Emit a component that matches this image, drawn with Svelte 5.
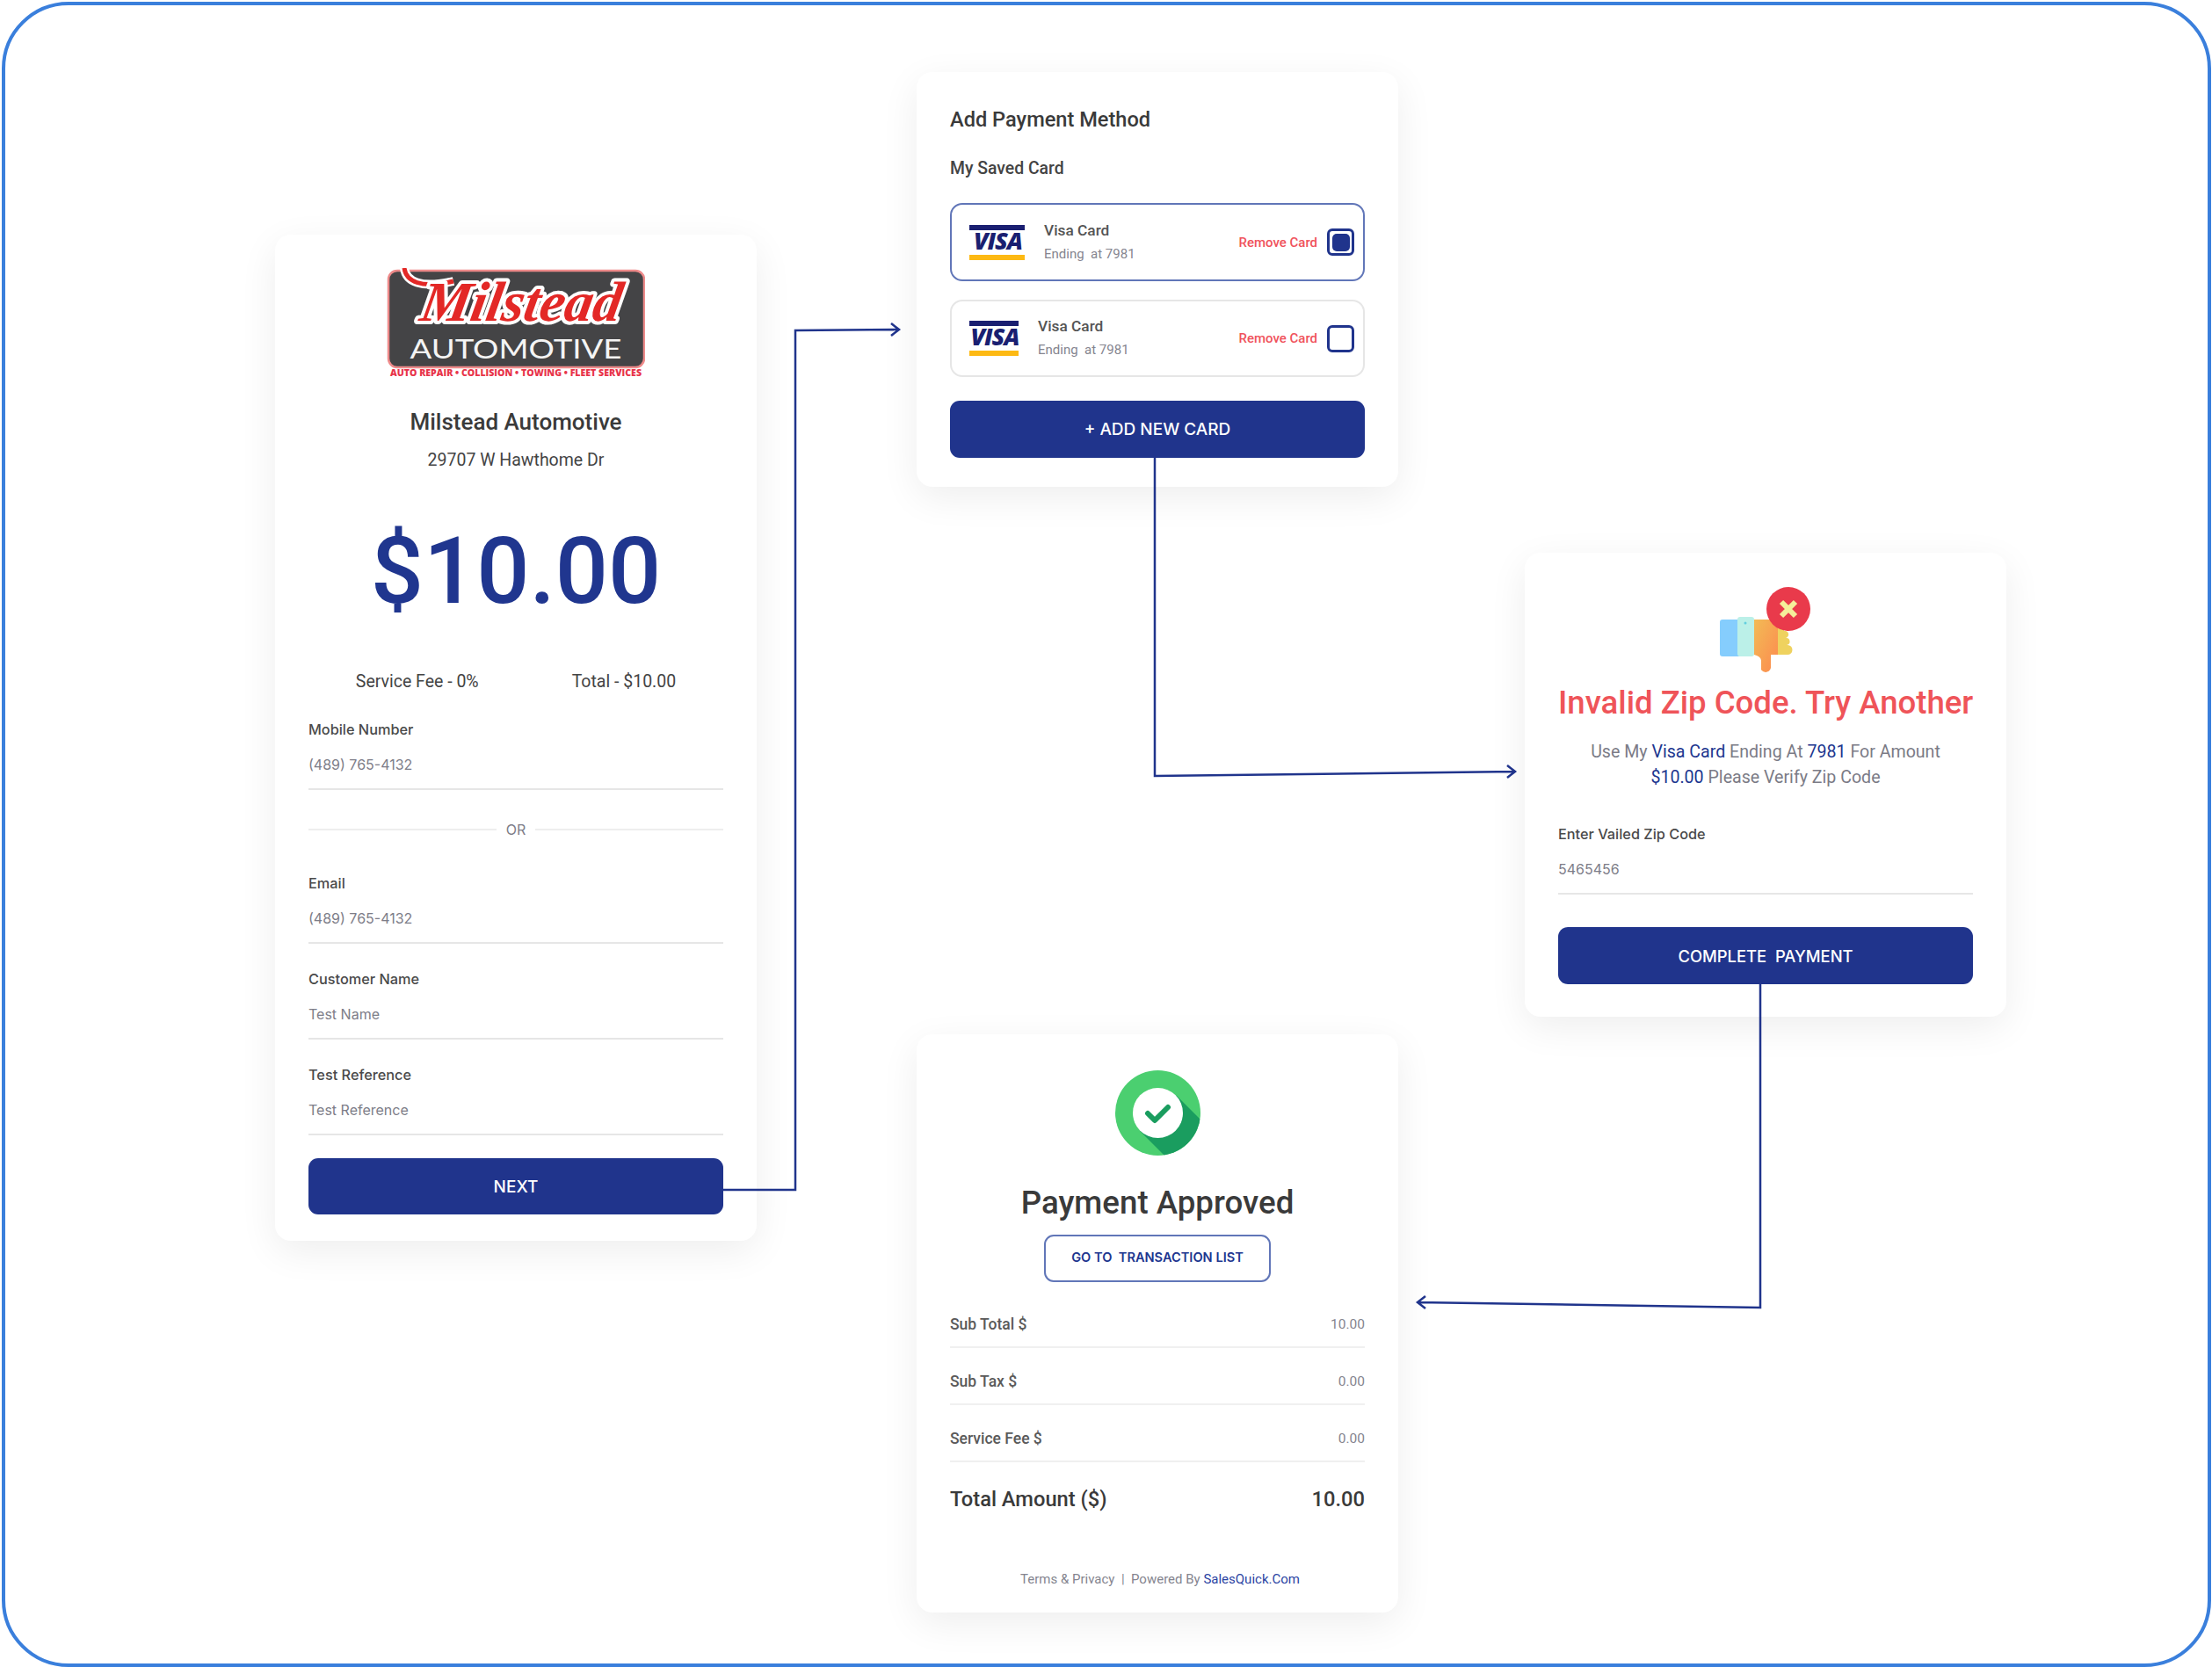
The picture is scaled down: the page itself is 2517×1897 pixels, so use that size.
<script>
	const fields = [
		{ label: "Customer Name", value: "Test Name" },
		{ label: "Test Reference", value: "Test Reference" }
	];
	const rows = [
		{ label: "Sub Total $", value: "10.00" },
		{ label: "Sub Tax $", value: "0.00" },
		{ label: "Service Fee $", value: "0.00" }
	];
</script>

{#snippet visa(width)}
	<svg class="visa" {width} height="40" viewBox="0 0 {width} 40">
		<rect width={width} height="6" fill="#1a1f71" />
		<rect y="34" width={width} height="6" fill="#fdb913" />
		<text x={width / 2 + 1} y="28" text-anchor="middle" class="visa-text">VISA</text>
	</svg>
{/snippet}

<div class="canvas">
	<svg class="links" width="2517" height="1897" viewBox="0 0 2517 1897" fill="none">
		<path d="M823 1354 H905 V376 L1023 375 M1014 368 L1023 375 L1014 382" />
		<path d="M1314 521 V883 L1724 878 M1715 871 L1724 878 L1715 885" />
		<path d="M2003 1120 V1488 L1613 1482 M1622 1475 L1613 1482 L1622 1489" />
	</svg>

	<section class="card start">
		<svg class="logo" width="294" height="125" viewBox="0 0 294 125">
			<rect x="2" y="3" width="291" height="110" rx="10" fill="#444446" stroke="#ee8a8a" stroke-width="2.5" />
			<path d="M20 0 C22 15 38 24 76 15" fill="none" stroke="#fff" stroke-width="10" />
			<path d="M20 0 C22 15 38 24 76 15" fill="none" stroke="#e32826" stroke-width="5" />
			<g transform="translate(36 60) skewX(-10)">
				<text class="script" textLength="228" lengthAdjust="spacingAndGlyphs">Milstead</text>
			</g>
			<text x="147" y="103" class="auto" text-anchor="middle" textLength="241" lengthAdjust="spacingAndGlyphs">AUTOMOTIVE</text>
			<text x="147" y="123" class="tag" text-anchor="middle" textLength="286" lengthAdjust="spacingAndGlyphs">AUTO REPAIR • COLLISION • TOWING • FLEET SERVICES</text>
		</svg>
		<h2 class="biz">Milstead Automotive</h2>
		<p class="addr">29707 W Hawthome Dr</p>
		<div class="amount">$10.00</div>
		<div class="fees"><span>Service Fee - 0%</span><span>Total - $10.00</span></div>

		<div class="field first">
			<div class="label">Mobile Number</div>
			<div class="value">(489) 765-4132</div>
		</div>
		<div class="or"><span>OR</span></div>
		<div class="field email">
			<div class="label">Email</div>
			<div class="value">(489) 765-4132</div>
		</div>
		{#each fields as f}
			<div class="field">
				<div class="label">{f.label}</div>
				<div class="value">{f.value}</div>
			</div>
		{/each}
		<button class="btn next">NEXT</button>
	</section>

	<section class="card method">
		<h3>Add Payment Method</h3>
		<h4>My Saved Card</h4>
		<div class="saved active">
			{@render visa(63)}
			<div class="saved-info">
				<div class="saved-name">Visa Card</div>
				<div class="saved-end">Ending&nbsp; at 7981</div>
			</div>
			<span class="remove">Remove Card</span>
			<span class="check on"><i></i></span>
		</div>
		<div class="saved">
			{@render visa(56)}
			<div class="saved-info">
				<div class="saved-name">Visa Card</div>
				<div class="saved-end">Ending&nbsp; at 7981</div>
			</div>
			<span class="remove">Remove Card</span>
			<span class="check"></span>
		</div>
		<button class="btn add">+ ADD NEW CARD</button>
	</section>

	<section class="card invalid">
		<svg class="thumb" width="104" height="98" viewBox="0 0 104 98">
			<defs>
				<linearGradient id="hand" x1="0" y1="0" x2="1" y2="1">
					<stop offset="0" stop-color="#f2bb55" />
					<stop offset="1" stop-color="#fd8a4f" />
				</linearGradient>
			</defs>
			<rect x="0" y="37" width="24" height="42" rx="3" fill="#85cdfd" />
			<path d="M60 40 H73 V50 a4 4 0 0 1 2 8 a4 4 0 0 1 1 8 h1 a5 5 0 0 1 0 11 H60 Z" fill="#efd25f" />
			<path d="M39 37 H66 V77 H58 V92 a6 6 0 0 1 -11 2 V84 Q47 79 39 77 Z" fill="url(#hand)" />
			<rect x="20" y="34" width="19" height="45" rx="3" fill="#bbf0e8" />
			<circle cx="29" cy="41" r="1.5" fill="#63cfe0" />
			<circle cx="78" cy="25" r="25" fill="#e93a4b" />
			<path d="M70 17 L86 33 M86 17 L70 33" stroke="#f5ee9a" stroke-width="6" />
		</svg>
		<h2 class="err">Invalid Zip Code. Try Another</h2>
		<p class="msg">Use My <b>Visa Card</b> Ending At <b>7981</b> For Amount<br /><b>$10.00</b> Please Verify Zip Code</p>
		<div class="field zip">
			<div class="label">Enter Vailed Zip Code</div>
			<div class="value">5465456</div>
		</div>
		<button class="btn complete">COMPLETE&nbsp; PAYMENT</button>
	</section>

	<section class="card approved">
		<svg class="ok" width="97" height="97" viewBox="0 0 97 97">
			<defs><clipPath id="disc"><circle cx="48.5" cy="48.5" r="48.5" /></clipPath></defs>
			<circle cx="48.5" cy="48.5" r="48.5" fill="#4bcf70" />
			<path d="M69 28 L120 79 L79 120 L28 69 Z" fill="#1a9d5f" clip-path="url(#disc)" />
			<circle cx="48.5" cy="48.5" r="28.5" fill="#fff" />
			<path d="M37 49 L45 57 L60 42" fill="none" stroke="#1a9d5f" stroke-width="6" stroke-linecap="round" stroke-linejoin="round" />
		</svg>
		<h2 class="done">Payment Approved</h2>
		<button class="outline">GO TO&nbsp; TRANSACTION LIST</button>
		<div class="rows">
			{#each rows as r}
				<div class="row"><span>{r.label}</span><span class="num">{r.value}</span></div>
			{/each}
		</div>
		<div class="total"><span>Total Amount ($)</span><span class="sum">10.00</span></div>
		<div class="foot">Terms &amp; Privacy &nbsp;|&nbsp; Powered By <b>SalesQuick.Com</b></div>
	</section>
</div>

<style>
	:global(body) {
		margin: 0;
		background: #fff;
	}

	.canvas {
		position: relative;
		width: 2517px;
		height: 1897px;
		overflow: hidden;
		font-family: Roboto, "Liberation Sans", sans-serif;
		color: #2f2f2f;
	}
	.canvas::before {
		content: "";
		position: absolute;
		inset: 2px 1px 0 2px;
		border: 4px solid #3a7fdc;
		border-radius: 76px;
	}

	.links {
		position: absolute;
		left: 0;
		top: 0;
		z-index: 2;
	}
	.links path {
		stroke: #20348c;
		stroke-width: 2.5;
	}

	/* the four screens are nodes of the flow diagram */
	.card {
		position: absolute;
		box-sizing: border-box;
		width: 548px;
		background: #fff;
		border-radius: 18px;
		box-shadow: 0 12px 44px rgba(0, 0, 0, 0.07);
		padding-left: 38px;
		padding-right: 38px;
		display: flex;
		flex-direction: column;
	}
	.start { left: 313px; top: 267px; height: 1145px; padding-top: 38px; }
	.method { left: 1043px; top: 82px; height: 472px; padding-top: 39px; }
	.invalid { left: 1735px; top: 629px; height: 528px; padding-top: 39px; }
	.approved { left: 1043px; top: 1177px; height: 658px; padding-top: 41px; }

	.logo, .thumb, .ok { align-self: center; flex: none; }

	.script {
		font: italic 700 64px "Liberation Serif", serif;
		fill: #e32826;
		stroke: #fff;
		stroke-width: 8px;
		paint-order: stroke;
		stroke-linejoin: round;
	}
	.auto {
		font: 400 31px Lato, sans-serif;
		fill: #f4f4f4;
	}
	.tag {
		font: 800 10.5px "Open Sans", sans-serif;
		fill: #e8344a;
	}

	h2, h3, h4, p { margin: 0; }

	.biz {
		margin-top: 35px;
		text-align: center;
		font-size: 26px;
		font-weight: 500;
		line-height: 30px;
		color: #3a3a3a;
	}
	.addr {
		margin-top: 17px;
		text-align: center;
		font-size: 19.5px;
		line-height: 24px;
		color: #444;
	}
	.amount {
		margin-top: 54px;
		text-align: center;
		font-size: 106px;
		font-weight: 500;
		line-height: 120px;
		color: #20368f;
	}
	.fees {
		margin-top: 54px;
		display: flex;
		justify-content: center;
		gap: 106px;
		font-size: 19.5px;
		line-height: 24px;
		color: #444;
	}

	.field {
		margin-top: 29px;
		border-bottom: 2px solid #e6e6e6;
		padding-bottom: 16px;
	}
	.field.first { margin-top: 31px; }
	.field.email { margin-top: 40px; }
	.label {
		font: 500 16.3px/22px Inter, Roboto, sans-serif;
		color: #4a4a4a;
	}
	.value {
		margin-top: 18px;
		font: 400 16px/22px Inter, Roboto, sans-serif;
		color: #7d7d88;
	}

	.or {
		margin-top: 35px;
		display: flex;
		align-items: center;
		gap: 11px;
		font: 400 16px/20px Inter, Roboto, sans-serif;
		color: #7d7d88;
	}
	.or::before, .or::after {
		content: "";
		flex: 1;
		height: 2px;
		background: #eeeeee;
	}

	.btn {
		display: block;
		width: 100%;
		border: 0;
		border-radius: 11px;
		background: #20348c;
		color: #fff;
		font: 500 19px Inter, Roboto, sans-serif;
		padding: 0;
	}
	.next { margin-top: 26px; height: 64px; }
	.add { margin-top: 27px; height: 65px; }
	.complete { margin-top: 37px; height: 65px; font-size: 18.4px; }

	h3 {
		font-size: 23.6px;
		font-weight: 500;
		line-height: 30px;
		color: #3a3a3a;
	}
	h4 {
		margin-top: 29px;
		font-size: 19.4px;
		font-weight: 500;
		line-height: 24px;
		color: #444;
	}
	.saved {
		box-sizing: border-box;
		margin-top: 21px;
		height: 88px;
		display: flex;
		align-items: center;
		gap: 22px;
		padding: 0 10px 0 20px;
		border: 2px solid #e6e6e6;
		border-radius: 14px;
	}
	.saved.active {
		margin-top: 27px;
		height: 89px;
		border-color: #6176b8;
	}
	.visa { flex: none; }
	.visa-text {
		font: italic 800 27px "Open Sans", sans-serif;
		fill: #1a1f71;
		letter-spacing: -1px;
	}
	.saved-info { flex: 1; padding-bottom: 2px; }
	.saved-name {
		font-size: 17.3px;
		font-weight: 500;
		line-height: 24px;
		color: #555;
	}
	.saved-end {
		margin-top: 4px;
		font-size: 15px;
		line-height: 22px;
		color: #85858f;
	}
	.remove {
		margin-right: -11px;
		font-size: 15px;
		font-weight: 500;
		color: #f0525c;
	}
	.check {
		box-sizing: border-box;
		width: 31px;
		height: 31px;
		border: 3px solid #20348c;
		border-radius: 6px;
		display: flex;
		align-items: center;
		justify-content: center;
	}
	.check i {
		width: 20px;
		height: 20px;
		border-radius: 5px;
		background: #20348c;
	}

	.err {
		margin-top: 12px;
		text-align: center;
		white-space: nowrap;
		font-size: 36.6px;
		font-weight: 500;
		line-height: 44px;
		color: #ef5459;
	}
	.msg {
		margin-top: 19px;
		text-align: center;
		font-size: 19.6px;
		line-height: 29px;
		color: #7b7b86;
	}
	.msg b {
		font-weight: 400;
		color: #20368f;
	}
	.field.zip { margin-top: 39px; }

	.done {
		margin-top: 32px;
		text-align: center;
		font-size: 36.7px;
		font-weight: 500;
		line-height: 44px;
		color: #3a3a3a;
	}
	.outline {
		align-self: center;
		flex: none;
		margin-top: 14px;
		width: 258px;
		height: 54px;
		padding: 0 0 2px;
		background: #fff;
		border: 2px solid #6176b8;
		border-radius: 11px;
		color: #20368f;
		font: 600 14.6px Inter, Roboto, sans-serif;
	}
	.rows { margin-top: 37px; }
	.row {
		display: flex;
		justify-content: space-between;
		align-items: center;
		font-size: 17.5px;
		font-weight: 500;
		line-height: 22px;
		color: #5a5a5a;
		padding-bottom: 14px;
		border-bottom: 2px solid #f0f0f0;
		margin-bottom: 27px;
	}
	.row:last-child { margin-bottom: 0; }
	.num {
		font-size: 15.5px;
		font-weight: 400;
		color: #85858f;
	}
	.total {
		margin-top: 27px;
		display: flex;
		justify-content: space-between;
		font-size: 23.7px;
		font-weight: 500;
		line-height: 30px;
		color: #3a3a3a;
	}
	.foot {
		margin-top: 66px;
		padding-left: 6px;
		text-align: center;
		font-size: 15px;
		line-height: 20px;
		color: #85858f;
	}
	.foot b {
		font-weight: 400;
		color: #2b44a3;
	}
</style>
